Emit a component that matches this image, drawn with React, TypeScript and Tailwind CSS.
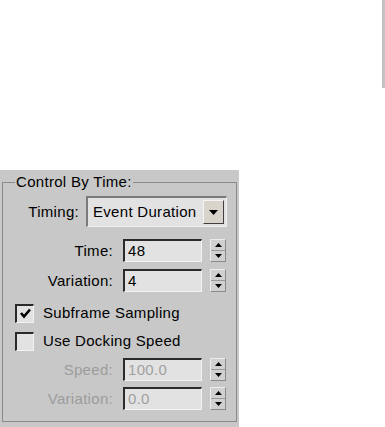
import React from 'react';

const sunken =
  'border-t-2 border-l-2 border-r border-b border-t-[#2a2a2a] border-l-[#2a2a2a] border-r-[#f2f2f2] border-b-[#f2f2f2] bg-[#e2e2e2]';

const Spinner = () => (
  <div className="w-[16px] h-[23px] flex flex-col border border-t-[#ececec] border-l-[#ececec] border-r-[#8a8a8a] border-b-[#8a8a8a] bg-[#d0d0d0]">
    <div className="flex-1 flex items-center justify-center border-b border-[#9a9a9a]">
      <svg width="7" height="4" viewBox="0 0 7 4">
        <polygon points="3.5,0 7,4 0,4" fill="#000" />
      </svg>
    </div>
    <div className="flex-1 flex items-center justify-center">
      <svg width="7" height="4" viewBox="0 0 7 4">
        <polygon points="0,0 7,0 3.5,4" fill="#000" />
      </svg>
    </div>
  </div>
);

const SpinRow = ({
  label,
  value,
  disabled,
  className,
}: {
  label: string;
  value: string;
  disabled?: boolean;
  className?: string;
}) => (
  <div className={`flex items-center h-[23px] ${className ?? ''}`}>
    <span className={`w-[110px] text-right ${disabled ? 'text-[#9c9c9c]' : 'text-black'}`}>{label}</span>
    <div className={`ml-[10px] w-[79px] h-[23px] flex items-center pl-[3px] ${sunken} ${disabled ? 'text-[#a0a0a0]' : 'text-black'}`}>
      {value}
    </div>
    <div className="ml-[8px]">
      <Spinner />
    </div>
  </div>
);

const CheckRow = ({ label, checked, className }: { label: string; checked?: boolean; className?: string }) => (
  <div className={`flex items-center h-[20px] pl-[12px] ${className ?? ''}`}>
    <div className={`w-[19px] h-[19px] flex items-center justify-center ${sunken}`}>
      {checked && (
        <svg width="13" height="13" viewBox="0 0 13 13">
          <polyline points="2,6 5,9.5 11,2.5" fill="none" stroke="#000" strokeWidth="2.6" />
        </svg>
      )}
    </div>
    <span className="ml-[9px] text-black">{label}</span>
  </div>
);

export default function App() {
  return (
    <div className="w-[385px] h-[427px] bg-white overflow-hidden font-['Liberation_Sans',Arial,sans-serif] text-[15px] leading-[18px] tracking-[0.3px]">
      <div className="h-[170px] flex justify-end">
        <div className="w-[3px] h-[88px] bg-[#c2c2c2]" />
      </div>
      <div className="w-[239px] h-[257px] bg-[#c8c8c8] pt-[12px] px-[2px]">
        <div className="relative w-[235px] h-[240px] border border-[#8a8a8a]">
          <span className="absolute left-[12px] -top-[10px] px-[1px] bg-[#c8c8c8] text-black">Control By Time:</span>

          <div className="flex items-center h-[31px] mt-[13px]">
            <span className="w-[76px] text-right text-black">Timing:</span>
            <div className="ml-[7px] w-[141px] h-[31px] flex items-center justify-between pl-[5px] pr-[2px] border-t-2 border-l-2 border-r border-b border-t-[#7a7a7a] border-l-[#7a7a7a] border-r-[#f0f0f0] border-b-[#f0f0f0] bg-[#e2e2e2]">
              <span className="text-black">Event Duration</span>
              <div className="w-[21px] h-[24px] flex items-center justify-center bg-[#d8d4cc] border border-t-[#f4f4f4] border-l-[#f4f4f4] border-r-[#404040] border-b-[#404040]">
                <svg width="9" height="5" viewBox="0 0 9 5">
                  <polygon points="0,0 9,0 4.5,5" fill="#000" />
                </svg>
              </div>
            </div>
          </div>

          <SpinRow label="Time:" value="48" className="mt-[12px]" />
          <SpinRow label="Variation:" value="4" className="mt-[7px]" />

          <CheckRow label="Subframe Sampling" checked className="mt-[11px]" />
          <CheckRow label="Use Docking Speed" className="mt-[8px]" />

          <SpinRow label="Speed:" value="100.0" disabled className="mt-[7px]" />
          <SpinRow label="Variation:" value="0.0" disabled className="mt-[6px]" />
        </div>
      </div>
    </div>
  );
}
